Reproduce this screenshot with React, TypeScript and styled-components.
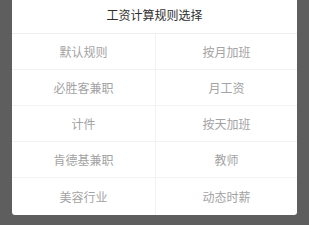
import React from "react";
import styled, { createGlobalStyle } from "styled-components";

const rules = [
  "默认规则",
  "按月加班",
  "必胜客兼职",
  "月工资",
  "计件",
  "按天加班",
  "肯德基兼职",
  "教师",
  "美容行业",
  "动态时薪",
];

const GlobalStyle = createGlobalStyle`
  html, body {
    margin: 0;
    padding: 0;
    background: #5e5e5e;
    font-family: "Noto Sans CJK SC", "Noto Sans", sans-serif;
  }
`;

const Overlay = styled.div`
  width: 309px;
  height: 225px;
  padding: 0 12px;
  box-sizing: border-box;
  background: #5e5e5e;
`;

const Dialog = styled.div`
  background: #fff;
  border-radius: 0 0 3px 3px;
  overflow: hidden;
`;

const Title = styled.div`
  height: 34px;
  box-sizing: border-box;
  padding-bottom: 5px;
  display: flex;
  align-items: center;
  justify-content: center;
  font-size: 12px;
  color: #2e2e2e;
  border-bottom: 1px solid #ededed;
`;

const Grid = styled.div`
  display: grid;
  grid-template-columns: 143px 1fr;
`;

const Cell = styled.div<{ $right: boolean; $last: boolean }>`
  display: flex;
  align-items: center;
  justify-content: center;
  font-size: 12px;
  color: #a3a3a3;
  box-sizing: border-box;
  border-bottom: ${(p) => (p.$last ? "none" : "1px solid #f2f2f2")};
  border-left: ${(p) => (p.$right ? "1px solid #f2f2f2" : "none")};
  height: ${(p) => (p.$last ? "37px" : "36px")};
`;

export default function App() {
  return (
    <>
      <GlobalStyle />
      <Overlay>
        <Dialog>
          <Title>工资计算规则选择</Title>
          <Grid>
            {rules.map((r, i) => (
              <Cell key={r} $right={i % 2 === 1} $last={i >= rules.length - 2}>
                {r}
              </Cell>
            ))}
          </Grid>
        </Dialog>
      </Overlay>
    </>
  );
}
